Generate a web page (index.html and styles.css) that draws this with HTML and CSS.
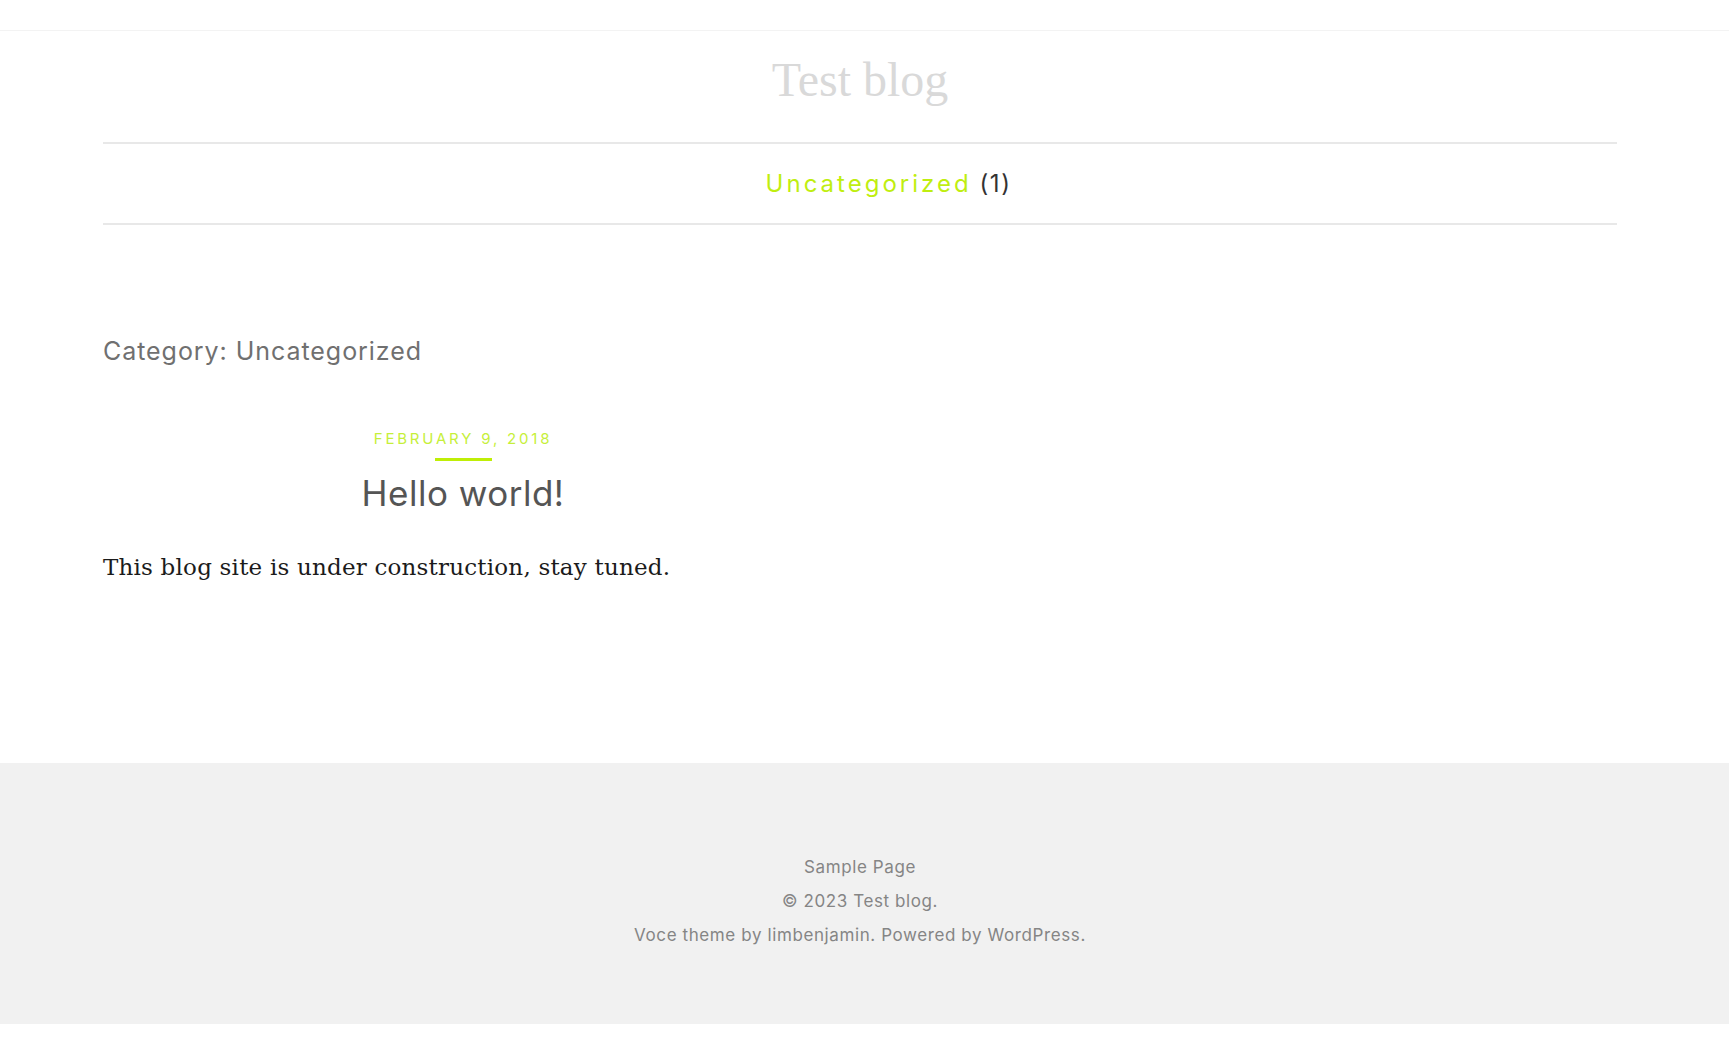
FILE: index.html
```html
<!DOCTYPE html>
<html lang="en">
<head>
<meta charset="utf-8">
<title>Uncategorized – Test blog</title>
<link rel="stylesheet" href="styles.css">
</head>
<body>
<div class="topbar"></div>
<header class="site-header wrap">
  <h1 class="site-title">Test blog</h1>
</header>
<nav class="cat-nav wrap">
  <a class="cat-link" href="#">Uncategorized</a> <span class="cat-count">(1)</span>
</nav>
<main class="content wrap">
  <h2 class="archive-title">Category: Uncategorized</h2>
  <article class="post">
    <div class="post-head">
      <div class="post-date">February 9, 2018</div>
      <div class="post-bar"></div>
      <h3 class="post-title">Hello world!</h3>
    </div>
    <p class="post-excerpt">This blog site is under construction, stay tuned.</p>
  </article>
</main>
<footer class="site-footer">
  <div class="footer-inner wrap">
    <a class="footer-link" href="#">Sample Page</a>
    <p class="footer-line">© 2023 Test blog.</p>
    <p class="footer-line">Voce theme by <a href="#">limbenjamin</a>. Powered by <a href="#">WordPress</a>.</p>
  </div>
</footer>
</body>
</html>
```
FILE: styles.css
```css
html, body {
  margin: 0;
  padding: 0;
  background: #fff;
}
body {
  font-family: "Inter", "Open Sans", sans-serif;
  color: #333;
}
a { text-decoration: none; }

.wrap {
  width: 1514px;
  margin-left: 103px;
}

.topbar {
  height: 30px;
  border-bottom: 1px solid #f3f3f3;
}

.site-header {
  display: flex;
  justify-content: center;
  height: 111px;
}
.site-title {
  margin: 0;
  padding-top: 21px;
  font-family: "Liberation Serif", serif;
  font-weight: 400;
  font-size: 48px;
  line-height: 56px;
  color: #d9d9d9;
}

.cat-nav {
  border-top: 2px solid #e8e8e8;
  border-bottom: 2px solid #e8e8e8;
  height: 79px;
  box-sizing: content-box;
  padding-left: 57px;
  width: 1457px;
  display: flex;
  justify-content: center;
  align-items: center;
  gap: 8px;
  font-size: 24px;
  letter-spacing: 3px;
}
.cat-link { color: #bfee10; }
.cat-count { color: #333; letter-spacing: 1.5px; }

.content {
  padding-top: 109px;
  min-height: 429px;
}
.archive-title {
  margin: 0;
  font-size: 25px;
  font-weight: 400;
  line-height: 34px;
  color: #707070;
  letter-spacing: 0.95px;
}

.post {
  width: 720px;
  margin-top: 61px;
}
.post-head {
  display: flex;
  flex-direction: column;
  align-items: center;
}
.post-date {
  font-size: 15px;
  line-height: 20px;
  letter-spacing: 2.8px;
  text-transform: uppercase;
  color: #c6ef3a;
}
.post-bar {
  width: 57px;
  height: 3px;
  background: #bfee06;
  margin-top: 9px;
}
.post-title {
  margin: 11px 0 0;
  font-size: 35px;
  line-height: 42px;
  font-weight: 400;
  color: #555;
  letter-spacing: 0.5px;
}
.post-excerpt {
  margin: 36px 0 0;
  font-family: "DejaVu Serif", serif;
  font-size: 23px;
  line-height: 34px;
  letter-spacing: 0.2px;
  color: #1b1b1b;
  white-space: nowrap;
}

.site-footer {
  background: #f1f1f1;
  height: 261px;
}
.footer-inner {
  padding-top: 87px;
  display: flex;
  flex-direction: column;
  align-items: center;
  font-size: 17px;
  line-height: 34px;
  letter-spacing: 0.6px;
  color: #858585;
}
.footer-link { color: #858585; }
.footer-line { margin: 0; }
.footer-line a { color: #858585; }
```
